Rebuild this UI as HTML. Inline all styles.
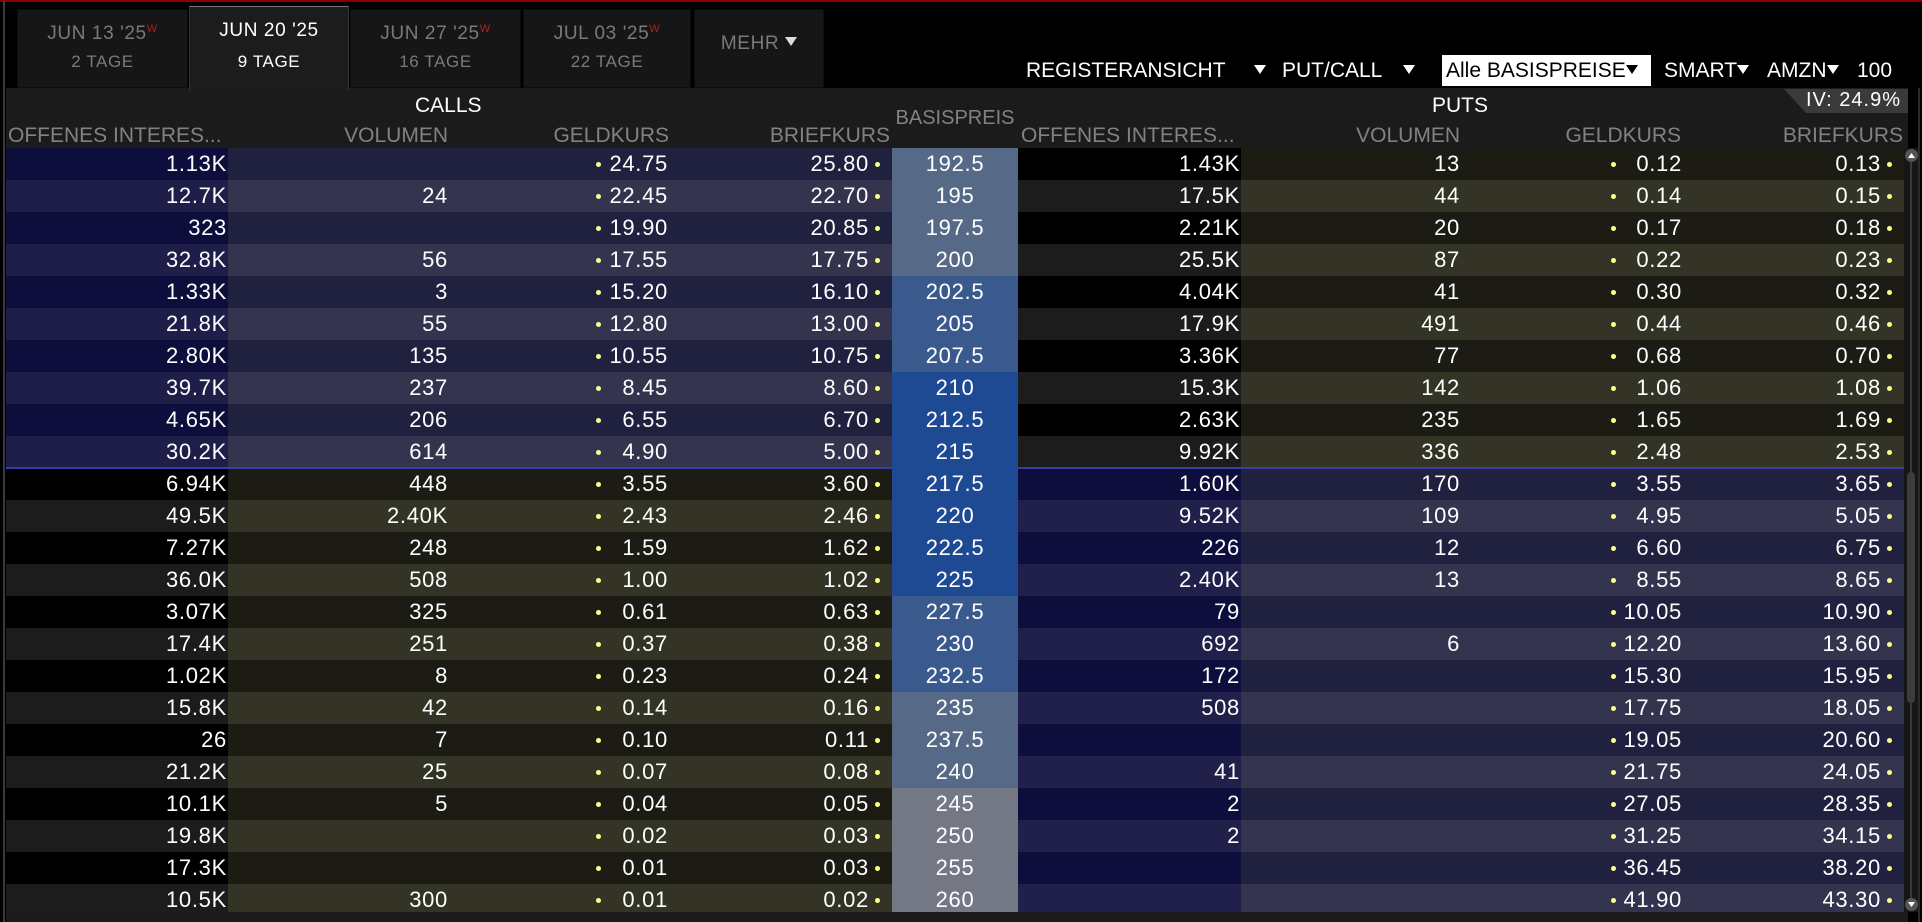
<!DOCTYPE html>
<html><head><meta charset="utf-8"><style>
*{margin:0;padding:0;box-sizing:border-box}
body{width:1922px;height:922px;background:#000;position:relative;overflow:hidden;font-family:"Liberation Sans",sans-serif;color:#fff}
.abs{position:absolute}
.redtop{left:0;top:0;width:1922px;height:2px;background:#8a0000}
.lb{left:3px;top:0;width:2px;height:922px;background:#3a3a3a}
.tab{position:absolute;top:9px;height:79px;background:#161616;border:1px solid #0c0c0c;text-align:center;color:#7a7a7a;font-size:19px;letter-spacing:.6px}
.tab .t1{position:absolute;left:0;right:0;top:13px}
.tab .t2{position:absolute;left:0;right:0;top:42px;font-size:17px}
.tab sup{color:#b02020;font-size:11px;vertical-align:0;position:relative;top:-7px}
.tab.act{top:6px;height:84px;background:#1c1c1c;color:#fff;border-top:1px solid #777;border-left:1px solid #333;border-right:1px solid #333;border-bottom:none}
.content{left:6px;top:88px;width:1902px;height:834px;background:#1b1b1b}
.tb{position:absolute;top:59px;font-size:21px;color:#fff;white-space:nowrap}
.tri{display:inline-block;width:0;height:0;border-left:6px solid transparent;border-right:6px solid transparent;border-top:9px solid #fff;vertical-align:3px}
.hd{position:absolute;top:124px;font-size:21px;color:#828282;white-space:nowrap}
.r{position:absolute;left:6px;width:1898px;height:32px;display:flex;font-size:22px;letter-spacing:.7px;line-height:32px}
.r div{position:relative;text-align:right;height:32px;white-space:nowrap}
.c1{width:222px;padding-right:1px}.c2{width:222px;padding-right:2px}.c3{width:222px;padding-right:4px}.c4{width:220px;padding-right:23px}
.c5{width:126px;text-align:center!important}.c6{width:223px;padding-right:1px}.c7{width:222px;padding-right:3px}.c8{width:222px;padding-right:3px}.c9{width:219px;padding-right:23px}
.r i{position:absolute;top:14px;width:5px;height:5px;border-radius:50%;background:#ffff90}
.c3 i{left:146px}.c4 i{left:203px}.c8 i{left:148px}.c9 i{left:202px}
.a.d .c1{background:#0e0e3c}.a.l .c1{background:#1e1e48}
.a.d .c2,.a.d .c3,.a.d .c4{background:#20203f}.a.l .c2,.a.l .c3,.a.l .c4{background:#34344f}
.a.d .c6{background:#000}.a.l .c6{background:#1c1c1c}
.a.d .c7,.a.d .c8,.a.d .c9{background:#1c1c14}.a.l .c7,.a.l .c8,.a.l .c9{background:#333326}
.b.d .c1{background:#000}.b.l .c1{background:#1c1c1c}
.b.d .c2,.b.d .c3,.b.d .c4{background:#1c1c14}.b.l .c2,.b.l .c3,.b.l .c4{background:#333326}
.b.d .c6{background:#0e0e3c}.b.l .c6{background:#20204a}
.b.d .c7,.b.d .c8,.b.d .c9{background:#20203f}.b.l .c7,.b.l .c8,.b.l .c9{background:#34344f}
.s1{background:#566987}.s2{background:#3a5a8e}.s3{background:#1e4a94}.s4{background:#737884}
</style></head><body>
<div class="abs redtop"></div>
<div class="abs lb"></div>
<div class="tab" style="left:17px;width:171px"><div class="t1">JUN 13 '25<sup>W</sup></div><div class="t2">2 TAGE</div></div>
<div class="tab" style="left:350px;width:171px"><div class="t1">JUN 27 '25<sup>W</sup></div><div class="t2">16 TAGE</div></div>
<div class="tab" style="left:523px;width:168px"><div class="t1">JUL 03 '25<sup>W</sup></div><div class="t2">22 TAGE</div></div>
<div class="tab" style="left:694px;width:130px"><div class="t1" style="top:23px">MEHR <span class="tri" style="border-top-color:#ddd"></span></div></div>
<div class="abs content"></div>
<div class="tab act" style="left:189px;width:160px"><div class="t1">JUN 20 '25</div><div class="t2" style="top:45px">9 TAGE</div></div>

<div class="tb" style="left:1026px">REGISTERANSICHT</div>
<div class="tb" style="left:1254px"><span class="tri"></span></div>
<div class="tb" style="left:1282px">PUT/CALL</div>
<div class="tb" style="left:1403px"><span class="tri"></span></div>
<div class="abs" style="left:1442px;top:55px;width:209px;height:31px;background:#fff"></div>
<div class="tb" style="left:1446px;color:#000">Alle BASISPREISE<span class="tri" style="border-top-color:#000"></span></div>
<div class="tb" style="left:1664px">SMART<span class="tri"></span></div>
<div class="tb" style="left:1767px">AMZN<span class="tri"></span></div>
<div class="tb" style="left:1857px">100</div>

<svg class="abs" style="left:1784px;top:89px" width="124" height="24"><polygon points="0,0 124,0 124,24 22,24" fill="#3a3a3a"/></svg>
<div class="abs" style="left:1806px;top:89px;font-size:20px;color:#fff;letter-spacing:1px">IV: 24.9%</div>

<div class="abs" style="left:415px;top:94px;font-size:21px">CALLS</div>
<div class="abs" style="left:1432px;top:94px;font-size:21px">PUTS</div>
<div class="hd" style="left:892px;width:126px;text-align:center;top:107px;font-size:20px">BASISPREIS</div>
<div class="hd" style="left:8px">OFFENES INTERES...</div>
<div class="hd" style="right:1474px">VOLUMEN</div>
<div class="hd" style="right:1253px">GELDKURS</div>
<div class="hd" style="right:1032px">BRIEFKURS</div>
<div class="hd" style="left:1021px">OFFENES INTERES...</div>
<div class="hd" style="right:462px">VOLUMEN</div>
<div class="hd" style="right:241px">GELDKURS</div>
<div class="hd" style="right:19px">BRIEFKURS</div>

<div class="r a d" style="top:148px"><div class="c1">1.13K</div><div class="c2"></div><div class="c3"><i></i>24.75</div><div class="c4">25.80<i></i></div><div class="c5 s1">192.5</div><div class="c6">1.43K</div><div class="c7">13</div><div class="c8"><i></i>0.12</div><div class="c9">0.13<i></i></div></div>
<div class="r a l" style="top:180px"><div class="c1">12.7K</div><div class="c2">24</div><div class="c3"><i></i>22.45</div><div class="c4">22.70<i></i></div><div class="c5 s1">195</div><div class="c6">17.5K</div><div class="c7">44</div><div class="c8"><i></i>0.14</div><div class="c9">0.15<i></i></div></div>
<div class="r a d" style="top:212px"><div class="c1">323</div><div class="c2"></div><div class="c3"><i></i>19.90</div><div class="c4">20.85<i></i></div><div class="c5 s1">197.5</div><div class="c6">2.21K</div><div class="c7">20</div><div class="c8"><i></i>0.17</div><div class="c9">0.18<i></i></div></div>
<div class="r a l" style="top:244px"><div class="c1">32.8K</div><div class="c2">56</div><div class="c3"><i></i>17.55</div><div class="c4">17.75<i></i></div><div class="c5 s1">200</div><div class="c6">25.5K</div><div class="c7">87</div><div class="c8"><i></i>0.22</div><div class="c9">0.23<i></i></div></div>
<div class="r a d" style="top:276px"><div class="c1">1.33K</div><div class="c2">3</div><div class="c3"><i></i>15.20</div><div class="c4">16.10<i></i></div><div class="c5 s2">202.5</div><div class="c6">4.04K</div><div class="c7">41</div><div class="c8"><i></i>0.30</div><div class="c9">0.32<i></i></div></div>
<div class="r a l" style="top:308px"><div class="c1">21.8K</div><div class="c2">55</div><div class="c3"><i></i>12.80</div><div class="c4">13.00<i></i></div><div class="c5 s2">205</div><div class="c6">17.9K</div><div class="c7">491</div><div class="c8"><i></i>0.44</div><div class="c9">0.46<i></i></div></div>
<div class="r a d" style="top:340px"><div class="c1">2.80K</div><div class="c2">135</div><div class="c3"><i></i>10.55</div><div class="c4">10.75<i></i></div><div class="c5 s2">207.5</div><div class="c6">3.36K</div><div class="c7">77</div><div class="c8"><i></i>0.68</div><div class="c9">0.70<i></i></div></div>
<div class="r a l" style="top:372px"><div class="c1">39.7K</div><div class="c2">237</div><div class="c3"><i></i>8.45</div><div class="c4">8.60<i></i></div><div class="c5 s3">210</div><div class="c6">15.3K</div><div class="c7">142</div><div class="c8"><i></i>1.06</div><div class="c9">1.08<i></i></div></div>
<div class="r a d" style="top:404px"><div class="c1">4.65K</div><div class="c2">206</div><div class="c3"><i></i>6.55</div><div class="c4">6.70<i></i></div><div class="c5 s3">212.5</div><div class="c6">2.63K</div><div class="c7">235</div><div class="c8"><i></i>1.65</div><div class="c9">1.69<i></i></div></div>
<div class="r a l" style="top:436px"><div class="c1">30.2K</div><div class="c2">614</div><div class="c3"><i></i>4.90</div><div class="c4">5.00<i></i></div><div class="c5 s3">215</div><div class="c6">9.92K</div><div class="c7">336</div><div class="c8"><i></i>2.48</div><div class="c9">2.53<i></i></div></div>
<div class="r b d" style="top:468px"><div class="c1">6.94K</div><div class="c2">448</div><div class="c3"><i></i>3.55</div><div class="c4">3.60<i></i></div><div class="c5 s3">217.5</div><div class="c6">1.60K</div><div class="c7">170</div><div class="c8"><i></i>3.55</div><div class="c9">3.65<i></i></div></div>
<div class="r b l" style="top:500px"><div class="c1">49.5K</div><div class="c2">2.40K</div><div class="c3"><i></i>2.43</div><div class="c4">2.46<i></i></div><div class="c5 s3">220</div><div class="c6">9.52K</div><div class="c7">109</div><div class="c8"><i></i>4.95</div><div class="c9">5.05<i></i></div></div>
<div class="r b d" style="top:532px"><div class="c1">7.27K</div><div class="c2">248</div><div class="c3"><i></i>1.59</div><div class="c4">1.62<i></i></div><div class="c5 s3">222.5</div><div class="c6">226</div><div class="c7">12</div><div class="c8"><i></i>6.60</div><div class="c9">6.75<i></i></div></div>
<div class="r b l" style="top:564px"><div class="c1">36.0K</div><div class="c2">508</div><div class="c3"><i></i>1.00</div><div class="c4">1.02<i></i></div><div class="c5 s3">225</div><div class="c6">2.40K</div><div class="c7">13</div><div class="c8"><i></i>8.55</div><div class="c9">8.65<i></i></div></div>
<div class="r b d" style="top:596px"><div class="c1">3.07K</div><div class="c2">325</div><div class="c3"><i></i>0.61</div><div class="c4">0.63<i></i></div><div class="c5 s2">227.5</div><div class="c6">79</div><div class="c7"></div><div class="c8"><i></i>10.05</div><div class="c9">10.90<i></i></div></div>
<div class="r b l" style="top:628px"><div class="c1">17.4K</div><div class="c2">251</div><div class="c3"><i></i>0.37</div><div class="c4">0.38<i></i></div><div class="c5 s2">230</div><div class="c6">692</div><div class="c7">6</div><div class="c8"><i></i>12.20</div><div class="c9">13.60<i></i></div></div>
<div class="r b d" style="top:660px"><div class="c1">1.02K</div><div class="c2">8</div><div class="c3"><i></i>0.23</div><div class="c4">0.24<i></i></div><div class="c5 s2">232.5</div><div class="c6">172</div><div class="c7"></div><div class="c8"><i></i>15.30</div><div class="c9">15.95<i></i></div></div>
<div class="r b l" style="top:692px"><div class="c1">15.8K</div><div class="c2">42</div><div class="c3"><i></i>0.14</div><div class="c4">0.16<i></i></div><div class="c5 s1">235</div><div class="c6">508</div><div class="c7"></div><div class="c8"><i></i>17.75</div><div class="c9">18.05<i></i></div></div>
<div class="r b d" style="top:724px"><div class="c1">26</div><div class="c2">7</div><div class="c3"><i></i>0.10</div><div class="c4">0.11<i></i></div><div class="c5 s1">237.5</div><div class="c6"></div><div class="c7"></div><div class="c8"><i></i>19.05</div><div class="c9">20.60<i></i></div></div>
<div class="r b l" style="top:756px"><div class="c1">21.2K</div><div class="c2">25</div><div class="c3"><i></i>0.07</div><div class="c4">0.08<i></i></div><div class="c5 s1">240</div><div class="c6">41</div><div class="c7"></div><div class="c8"><i></i>21.75</div><div class="c9">24.05<i></i></div></div>
<div class="r b d" style="top:788px"><div class="c1">10.1K</div><div class="c2">5</div><div class="c3"><i></i>0.04</div><div class="c4">0.05<i></i></div><div class="c5 s4">245</div><div class="c6">2</div><div class="c7"></div><div class="c8"><i></i>27.05</div><div class="c9">28.35<i></i></div></div>
<div class="r b l" style="top:820px"><div class="c1">19.8K</div><div class="c2"></div><div class="c3"><i></i>0.02</div><div class="c4">0.03<i></i></div><div class="c5 s4">250</div><div class="c6">2</div><div class="c7"></div><div class="c8"><i></i>31.25</div><div class="c9">34.15<i></i></div></div>
<div class="r b d" style="top:852px"><div class="c1">17.3K</div><div class="c2"></div><div class="c3"><i></i>0.01</div><div class="c4">0.03<i></i></div><div class="c5 s4">255</div><div class="c6"></div><div class="c7"></div><div class="c8"><i></i>36.45</div><div class="c9">38.20<i></i></div></div>
<div class="r b l" style="top:884px;height:28px;overflow:hidden"><div class="c1">10.5K</div><div class="c2">300</div><div class="c3"><i></i>0.01</div><div class="c4">0.02<i></i></div><div class="c5 s4">260</div><div class="c6"></div><div class="c7"></div><div class="c8"><i></i>41.90</div><div class="c9">43.30<i></i></div></div>

<div class="abs" style="left:6px;top:467px;width:1898px;height:2px;background:#3c3ca8"></div>
<div class="abs" style="left:892px;top:467px;width:126px;height:2px;background:#1e4a94"></div>

<div class="abs" style="left:1904px;top:148px;width:16px;height:764px;background:#161616"></div>
<div class="abs" style="left:1910px;top:160px;width:2px;height:740px;background:#3a3a3a"></div>
<div class="abs" style="left:1907px;top:472px;width:8px;height:231px;background:#3c3c3c;border-radius:4px"></div>
<svg class="abs" style="left:1904px;top:148px" width="16" height="16"><circle cx="7.5" cy="7.5" r="6.5" fill="#555"/><polygon points="4,10 11,10 7.5,5" fill="#fff"/></svg>
<svg class="abs" style="left:1904px;top:897px" width="16" height="16"><circle cx="7.5" cy="7.5" r="6.5" fill="#555"/><polygon points="4,5 11,5 7.5,10" fill="#fff"/></svg>
<div class="abs" style="left:1918px;top:88px;width:2px;height:834px;background:#2a2a2a"></div>
</body></html>
